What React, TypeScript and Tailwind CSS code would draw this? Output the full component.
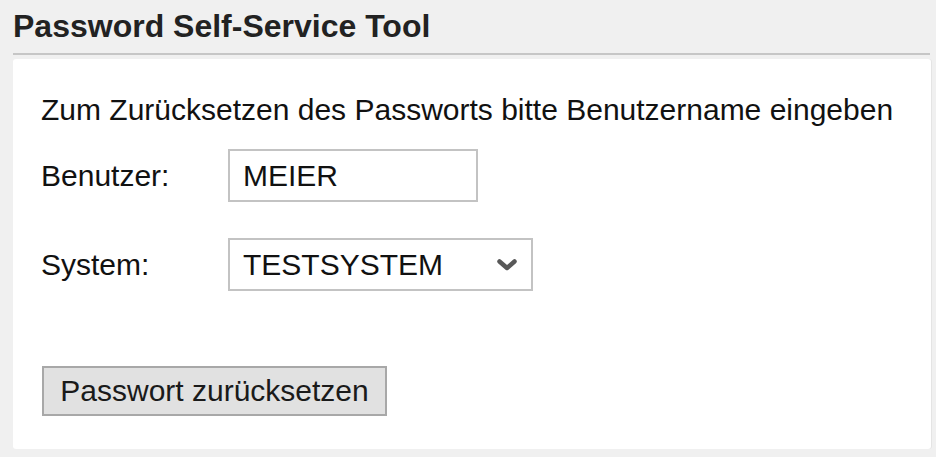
import { useState } from "react";

const FONT = "font-['Liberation_Sans',Arial,sans-serif]";

export default function App() {
  const [user, setUser] = useState("MEIER");
  const [system, setSystem] = useState("TESTSYSTEM");

  return (
    <div className={`min-h-[457px] w-full bg-[#f0f0f0] pl-[13px] pr-[5px] ${FONT}`}>
      <h1 className="pt-[8px] text-[32px] font-bold leading-[36px] text-[#222222]">
        Password Self-Service Tool
      </h1>
      <div className="mt-[9px] h-[2px] w-[917px] bg-[#c6c6c6]" />

      <div className="mt-[4px] rounded-[3px] bg-white pt-[34px] pb-[33px] pl-[28px] shadow-[1px_0_0_#e4e4e4]">
        <p className="text-[30px] leading-[34px] text-[#111111]">
          Zum Zurücksetzen des Passworts bitte Benutzername eingeben
        </p>

        <div className="mt-[22px] flex items-center">
          <label className="w-[187px] text-[30px] leading-[34px] text-[#111111]">Benutzer:</label>
          <input
            value={user}
            onChange={(e) => setUser(e.target.value)}
            className="h-[53px] w-[250px] border-2 border-[#c3c3c3] bg-white pl-[13px] text-[30px] text-[#111111] outline-none"
          />
        </div>

        <div className="mt-[36px] flex items-center">
          <label className="w-[187px] text-[30px] leading-[34px] text-[#111111]">System:</label>
          <div className="relative">
            <select
              value={system}
              onChange={(e) => setSystem(e.target.value)}
              className="h-[53px] w-[305px] appearance-none border-2 border-[#c3c3c3] bg-white pl-[13px] text-[30px] text-[#111111] outline-none"
            >
              <option>TESTSYSTEM</option>
              <option>PRODUKTION</option>
            </select>
            <svg
              className="pointer-events-none absolute left-[269px] top-[21px]"
              width="20"
              height="12"
              viewBox="0 0 20 12"
            >
              <path
                d="M2.5 2.5 L10 9 L17.5 2.5"
                fill="none"
                stroke="#585858"
                strokeWidth="4.5"
                strokeLinecap="round"
                strokeLinejoin="round"
              />
            </svg>
          </div>
        </div>

        <button className="mt-[75px] ml-[1px] h-[50px] w-[345px] border-2 border-[#a8a8a8] bg-[#e1e1e1] text-[30px] leading-[34px] text-[#1a1a1a]">
          Passwort zurücksetzen
        </button>
      </div>
    </div>
  );
}
